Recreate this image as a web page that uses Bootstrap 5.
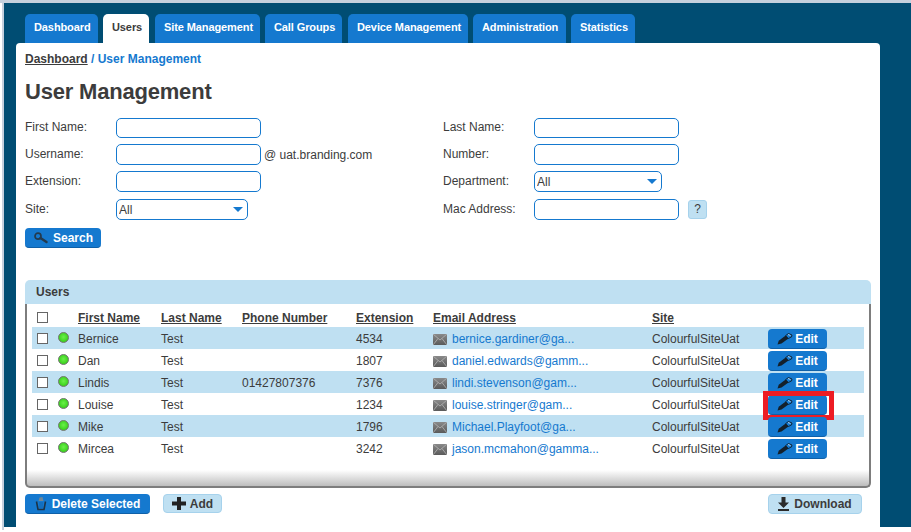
<!DOCTYPE html>
<html lang="en">
<head>
  <meta charset="UTF-8">
  <title>User Management</title>
  <link href="https://cdn.jsdelivr.net/npm/bootstrap@5.3.2/dist/css/bootstrap.min.css" rel="stylesheet">
  <style>
    html, body { height: 100%; overflow: hidden; }
    body { background: #fff; font-family: "Liberation Sans", Arial, sans-serif; font-size: 12px; color: #3c3c3c; }
    .edge-top { height: 3px; background: #c5d1de; }
    .shell { height: 524px; background: #004d73; margin-left: 2px; padding-top: 11px; position: relative; }
    .edge-left { position: absolute; left: 0; top: 0; width: 2px; height: 527px; background: #c5d1de; }
    .tabbar { padding-left: 23px; height: 29px; flex-wrap: nowrap; }
    .tabbar .nav-item { width: 83px; }
    .tabbar .nav-item:nth-child(1) { width: 78px; }
    .tabbar .nav-item:nth-child(2) { width: 52px; }
    .tabbar .nav-item:nth-child(3) { width: 110px; }
    .tabbar .nav-item:nth-child(4) { width: 83px; }
    .tabbar .nav-item:nth-child(5) { width: 125px; }
    .tabbar .nav-item:nth-child(6) { width: 98px; }
    .tabbar .nav-item:nth-child(7) { width: 69px; }
    .tabbar .nav-link { height: 29px; margin-right: 5px; padding: 7px 0 0 9px; background: #1579cf; color: #fff; font-size: 11px; font-weight: 700; letter-spacing: -.1px; white-space: nowrap; border-radius: 5px 5px 0 0; line-height: 13px; }
    .tabbar .nav-item:nth-child(2) .nav-link, .tabbar .nav-item:nth-child(4) .nav-link { margin-right: 6px; }
    .tabbar .nav-link.active { background: #fff; color: #3c3c3c; }
    .sheet { background: #fff; margin: 0 31px 0 14px; height: 484px; border-radius: 4px 4px 0 0; padding: 9px 9px 0; position: relative; }
    .crumbs { font-weight: 700; line-height: 15px; color: #1579cf; }
    .crumbs a { color: #3c3c3c; }
    .page-title { font-size: 22px; font-weight: 700; letter-spacing: -.2px; line-height: 26px; margin: 12px 0 13px; color: #3c3c3c; }
    .filter-col { width: 418px; }
    .filter-row { height: 21px; margin-bottom: 6px; }
    .filter-row:first-child { height: 20px; }
    .filter-row:nth-child(3) { margin-bottom: 7px; }
    .filter-row label { width: 91px; flex: none; padding-bottom: 2px; }
    .filter-row .form-control, .filter-row .form-select {
      height: 100%; width: 145px; padding: 0 2px; border: 1px solid #1579cf; border-radius: 5px;
      font-size: 12px; color: #3c3c3c; min-height: 0; box-shadow: none;
    }
    .filter-row .form-select {
      width: 132px;
      background-image: url("data:image/svg+xml,%3Csvg xmlns='http://www.w3.org/2000/svg' width='10' height='5'%3E%3Cpath d='M0 0h10L5 5z' fill='%231579cf'/%3E%3C/svg%3E");
      background-position: right 4px center; background-size: 10px 5px;
    }
    .filter-row .select-narrow { width: 128px; }
    .domain-text { margin-left: 3px; }
    .btn-hint { width: 19px; height: 19px; margin-left: 9px; padding: 0; font-size: 12px; line-height: 17px; background: #bfe0f2; border: 1px solid #a6d2ec; border-radius: 3px; color: #3c3c3c; }
    .act { display: inline-flex; align-items: center; justify-content: center; height: 20px; padding: 0; font-size: 12px; font-weight: 700; line-height: 1; border-radius: 4px; white-space: nowrap; }
    .act-blue { background: #1579cf; border: 0; border-bottom: 1px solid #0f60a8; color: #fff; }
    .act-pale { background: #bfe0f2; border: 1px solid #a6d2ec; color: #3c3c3c; }
    .act svg { flex: none; }
    .btn-search { width: 76px; margin-top: 2px; gap: 5px; }
    .users-panel { margin-top: 32px; }
    .users-head { height: 24px; background: #bfe0f2; border-radius: 6px 6px 0 0; padding: 5px 11px; font-weight: 700; line-height: 14px; border: 0; }
    .users-body {
      height: 184px; padding: 5px 5px 0; border: 2px solid #7d7d7d; border-top: 0; border-radius: 0 0 5px 5px;
      background: linear-gradient(#fff, #bdbdbd) bottom / 100% 16px no-repeat #fff;
    }
    .user-table { width: 832px; table-layout: fixed; margin: 0; color: #3c3c3c; --bs-table-bg: transparent; }
    .user-table th, .user-table td { padding: 0; border: 0; height: 22px; vertical-align: middle; white-space: nowrap; font-size: 12px; line-height: 14px; box-shadow: none; background: transparent; color: #3c3c3c; }
    .user-table thead th { height: 18px; font-weight: 700; text-decoration: underline; padding-bottom: 1px; }
    .user-table tbody td { padding-top: 1px; }
    .user-table tbody td:last-child { padding-top: 2px; vertical-align: top; }
    .user-table tbody tr:nth-child(odd) td { background: #bfe0f2; }
    .user-table .form-check-input { display: block; width: 11px; height: 11px; margin: 0 0 0 5px; border: 1px solid #666; border-radius: 0; background-color: #fff; }
    .status-dot { display: block; width: 11px; height: 11px; margin: -2px 0 0 5px; border-radius: 50%; background: radial-gradient(circle at 50% 45%, #6bf04a, #3fd421 65%, #2f9a22); border: 1px solid #777; }
    .user-table a { color: #1579cf; text-decoration: none; }
    .mail-icon { display: inline-block; vertical-align: -2px; margin-right: 5px; }
    .btn-edit { display: flex; width: 59px; gap: 2px; }
    .edit-mark { position: absolute; left: -5px; top: -4px; width: 71px; height: 29px; border: 5px solid #ed1c24; pointer-events: none; }
    .edit-cell { position: relative; display: block; width: 59px; height: 20px; }
    .panel-actions { margin-top: 6px; }
    .btn-delete { width: 125px; gap: 5px; }
    .btn-add { width: 59px; height: 19px; gap: 4px; margin-left: 13px; }
    .btn-download { width: 94px; gap: 5px; margin-right: 9px; }
  </style>
</head>
<body>
  <div class="edge-top"></div>
  <div class="shell">
    <div class="edge-left"></div>
    <ul class="nav tabbar">
      <li class="nav-item"><a class="nav-link" href="#">Dashboard</a></li>
      <li class="nav-item"><a class="nav-link active" href="#">Users</a></li>
      <li class="nav-item"><a class="nav-link" href="#">Site Management</a></li>
      <li class="nav-item"><a class="nav-link" href="#">Call Groups</a></li>
      <li class="nav-item"><a class="nav-link" href="#">Device Management</a></li>
      <li class="nav-item"><a class="nav-link" href="#">Administration</a></li>
      <li class="nav-item"><a class="nav-link" href="#">Statistics</a></li>
    </ul>

    <div class="sheet">
      <div class="crumbs"><a href="#">Dashboard</a> / User Management</div>
      <h1 class="page-title">User Management</h1>

      <!-- Search form -->
      <div class="d-flex">
        <div class="filter-col">
          <div class="filter-row d-flex align-items-center"><label>First Name:</label><input class="form-control" type="text"></div>
          <div class="filter-row d-flex align-items-center"><label>Username:</label><input class="form-control" type="text"><span class="domain-text">@ uat.branding.com</span></div>
          <div class="filter-row d-flex align-items-center"><label>Extension:</label><input class="form-control" type="text"></div>
          <div class="filter-row d-flex align-items-center"><label>Site:</label><select class="form-select"><option>All</option></select></div>
        </div>
        <div class="filter-col">
          <div class="filter-row d-flex align-items-center"><label>Last Name:</label><input class="form-control" type="text"></div>
          <div class="filter-row d-flex align-items-center"><label>Number:</label><input class="form-control" type="text"></div>
          <div class="filter-row d-flex align-items-center"><label>Department:</label><select class="form-select select-narrow"><option>All</option></select></div>
          <div class="filter-row d-flex align-items-center"><label>Mac Address:</label><input class="form-control" type="text"><button class="btn btn-hint" type="button">?</button></div>
        </div>
      </div>
      <button class="btn act act-blue btn-search" type="button">
        <svg width="15" height="12" viewBox="0 0 15 12"><circle cx="5" cy="4.200" r="3" fill="none" stroke="#243a4d" stroke-width="1.700"/><path d="M7.500 6l6 4" stroke="#243a4d" stroke-width="2.400" stroke-linecap="round"/></svg>
        Search
      </button>

      <!-- Users -->
      <div class="card users-panel border-0 bg-transparent">
        <div class="card-header users-head">Users</div>
        <div class="users-body">
          <table class="table user-table">
            <colgroup>
              <col style="width:21px"><col style="width:25px"><col style="width:83px"><col style="width:81px"><col style="width:114px"><col style="width:77px"><col style="width:219px"><col style="width:116px"><col style="width:96px">
            </colgroup>
            <thead>
              <tr><th><input class="form-check-input" type="checkbox"></th><th></th><th>First Name</th><th>Last Name</th><th>Phone Number</th><th>Extension</th><th>Email Address</th><th>Site</th><th></th></tr>
            </thead>
            <tbody id="userRows"></tbody>
          </table>
        </div>
      </div>

      <div class="panel-actions d-flex align-items-start">
        <button class="btn act act-blue btn-delete" type="button">
          <svg width="12" height="15" viewBox="0 0 12 15"><path d="M1.500 5.500L3 13.500h6l1.500-8" fill="none" stroke="#1d3346" stroke-width="1.600"/><path d="M3.500 5L4.500 1.500 7.500 1l1 4z" fill="#6f8698"/><path d="M5 6v6M7 6v6" stroke="#0f60a8" stroke-width=".8"/></svg>
          Delete Selected
        </button>
        <button class="btn act act-pale btn-add" type="button">
          <svg width="14" height="13" viewBox="0 0 14 13"><path d="M5 0h4v4.500h5v4H9V13H5V8.500H0v-4h5z" fill="#222"/></svg>
          Add
        </button>
        <button class="btn act act-pale btn-download ms-auto" type="button">
          <svg width="11" height="14" viewBox="0 0 11 14"><path d="M3.500 0h4v5.500H11L5.500 11 0 5.500h3.500zM0 12h11v2H0z" fill="#2b2b2b"/></svg>
          Download
        </button>
      </div>
    </div>
  </div>

  <script>
    const users = [
      ['Bernice', 'Test', '', '4534', 'bernice.gardiner@ga...'],
      ['Dan', 'Test', '', '1807', 'daniel.edwards@gamm...'],
      ['Lindis', 'Test', '01427807376', '7376', 'lindi.stevenson@gam...'],
      ['Louise', 'Test', '', '1234', 'louise.stringer@gam...'],
      ['Mike', 'Test', '', '1796', 'Michael.Playfoot@ga...'],
      ['Mircea', 'Test', '', '3242', 'jason.mcmahon@gamma...']
    ];
    const mail = '<svg class="mail-icon" width="14" height="11" viewBox="0 0 14 11"><defs><linearGradient id="mg" x1="0" y1="0" x2="0" y2="1"><stop offset="0" stop-color="#8a8a8a"/><stop offset="1" stop-color="#5a5a5a"/></linearGradient></defs><rect width="14" height="11" fill="url(#mg)"/><path d="M0 0l7 6 7-6M0 11l5-6.500M14 11L9 4.500" fill="none" stroke="#b5b5b5" stroke-width=".8"/></svg>';
    const pencil = '<svg width="16" height="12" viewBox="0 0 16 12"><path d="M.500 11.500l1.200-3.700 7-5.300 2.800 3-7 5z" fill="#14202b"/><path d="M8.700 2.500l2.800-2 3.500 1.500-.5 2-3.200 1.500z" fill="#1579cf" stroke="#10202e" stroke-width=".9"/><path d="M11 1.500l2.500 1" stroke="#d8e6f0" stroke-width=".8"/></svg>';
    document.getElementById('userRows').innerHTML = users.map((u, i) => `
      <tr>
        <td><input class="form-check-input" type="checkbox"></td>
        <td><span class="status-dot"></span></td>
        <td>${u[0]}</td><td>${u[1]}</td><td>${u[2]}</td><td>${u[3]}</td>
        <td>${mail}<a href="#">${u[4]}</a></td>
        <td>ColourfulSiteUat</td>
        <td><span class="edit-cell"><button class="btn act act-blue btn-edit" type="button">${pencil}Edit</button>${i === 3 ? '<span class="edit-mark"></span>' : ''}</span></td>
      </tr>`).join('');
  </script>
  <script src="https://cdn.jsdelivr.net/npm/bootstrap@5.3.2/dist/js/bootstrap.bundle.min.js"></script>
</body>
</html>
